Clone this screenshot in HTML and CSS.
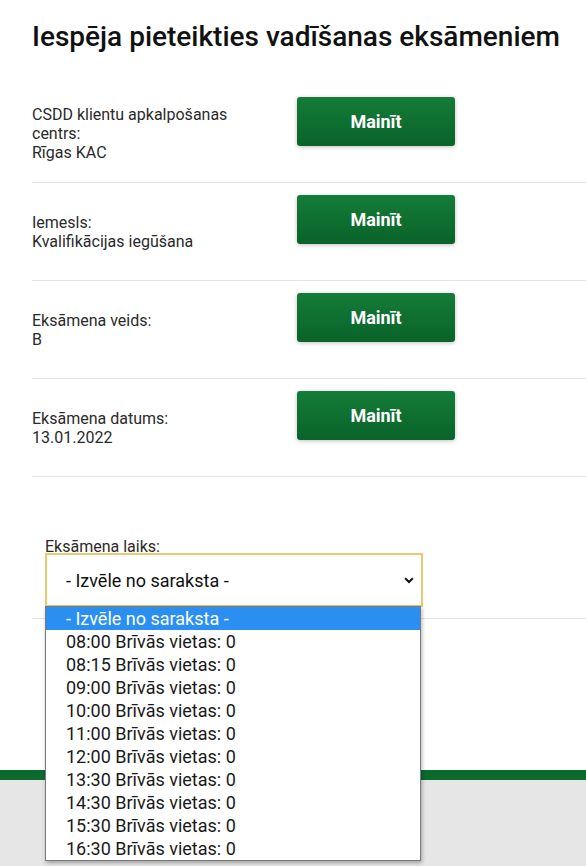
FILE: index.html
```html
<!DOCTYPE html>
<html lang="lv">
<head>
<meta charset="utf-8">
<title>Iespēja pieteikties vadīšanas eksāmeniem</title>
<link rel="stylesheet" href="styles.css">
</head>
<body>
<main class="page">
  <h1 class="title">Iespēja pieteikties vadīšanas eksāmeniem</h1>

  <div class="rows">
    <div class="row">
      <div class="row-text">CSDD klientu apkalpošanas centrs:<br>Rīgas KAC</div>
      <button class="btn">Mainīt</button>
    </div>
    <div class="row">
      <div class="row-text">Iemesls:<br>Kvalifikācijas iegūšana</div>
      <button class="btn">Mainīt</button>
    </div>
    <div class="row">
      <div class="row-text">Eksāmena veids:<br>B</div>
      <button class="btn">Mainīt</button>
    </div>
    <div class="row">
      <div class="row-text">Eksāmena datums:<br>13.01.2022</div>
      <button class="btn">Mainīt</button>
    </div>
  </div>

  <div class="time-section">
    <div class="field">
      <div class="field-label">Eksāmena laiks:</div>
      <div class="select">
        <span class="select-value">- Izvēle no saraksta -</span>
        <svg class="select-arrow" width="10" height="7" viewBox="0 0 10 7"><path d="M1.2 1.3 L5 5 L8.8 1.3" fill="none" stroke="#111" stroke-width="2"/></svg>
      </div>
      <ul class="dropdown">
        <li class="opt opt-active">- Izvēle no saraksta -</li>
        <li class="opt">08:00 Brīvās vietas: 0</li>
        <li class="opt">08:15 Brīvās vietas: 0</li>
        <li class="opt">09:00 Brīvās vietas: 0</li>
        <li class="opt">10:00 Brīvās vietas: 0</li>
        <li class="opt">11:00 Brīvās vietas: 0</li>
        <li class="opt">12:00 Brīvās vietas: 0</li>
        <li class="opt">13:30 Brīvās vietas: 0</li>
        <li class="opt">14:30 Brīvās vietas: 0</li>
        <li class="opt">15:30 Brīvās vietas: 0</li>
        <li class="opt">16:30 Brīvās vietas: 0</li>
      </ul>
    </div>
  </div>
  <div class="spacer"></div>
</main>
<footer class="footer"></footer>
</body>
</html>
```

FILE: styles.css
```css
html, body {
  margin: 0;
  padding: 0;
  background: #ffffff;
  overflow: hidden;
}
body {
  font-family: Roboto, "Liberation Sans", Arial, sans-serif;
  color: #222222;
}
.page {
  padding-left: 32px;
}
.title {
  margin: 0 0 31px 0;
  padding-top: 20px;
  font-size: 28px;
  line-height: 34px;
  font-weight: 500;
  color: #111111;
  letter-spacing: 0;
}
.row {
  display: flex;
  align-items: center;
  gap: 35px;
  border-bottom: 1px solid #e3e3e3;
}
.row-text {
  width: 230px;
  font-size: 16px;
  line-height: 19px;
  color: #2a2a2a;
}
.btn {
  margin: 12px 0 36px 0;
  width: 158px;
  height: 49px;
  border: none;
  border-radius: 3px;
  background: linear-gradient(#147c38, #0a6329);
  box-shadow: 0 1px 4px rgba(0, 0, 0, 0.25);
  color: #ffffff;
  font-family: Roboto, "Liberation Sans", Arial, sans-serif;
  font-size: 18px;
  font-weight: 700;
  padding: 0 0 1px 0;
}
.time-section {
  padding: 63px 0 11px 0;
  border-bottom: 1px solid #e3e3e3;
}
.field {
  position: relative;
  margin-left: 13px;
  width: 378px;
}
.field-label {
  font-size: 16px;
  line-height: 13px;
  color: #2a2a2a;
}
.select {
  box-sizing: border-box;
  height: 54px;
  border: 2px solid #ebc96e;
  background: #ffffff;
  display: flex;
  align-items: center;
  justify-content: space-between;
  padding: 0 7px 0 19px;
}
.select-value {
  font-size: 18px;
  color: #111111;
}
.select-arrow {
  display: block;
}
.dropdown {
  position: absolute;
  left: 0;
  top: 66px;
  width: 376px;
  box-sizing: border-box;
  margin: 0;
  padding: 0;
  list-style: none;
  background: #ffffff;
  border: 1px solid #7a7a7a;
  box-shadow: 1px 2px 4px rgba(0, 0, 0, 0.3);
  z-index: 5;
}
.opt {
  height: 23px;
  line-height: 23px;
  padding-left: 20px;
  font-size: 18px;
  color: #1a1a1a;
  white-space: nowrap;
}
.opt-active {
  background: #2a8ff0;
  color: #ffffff;
}
.spacer {
  height: 151px;
}
.footer {
  height: 86px;
  border-top: 10px solid #0b6a2e;
  background: #e6e6e6;
}
```
